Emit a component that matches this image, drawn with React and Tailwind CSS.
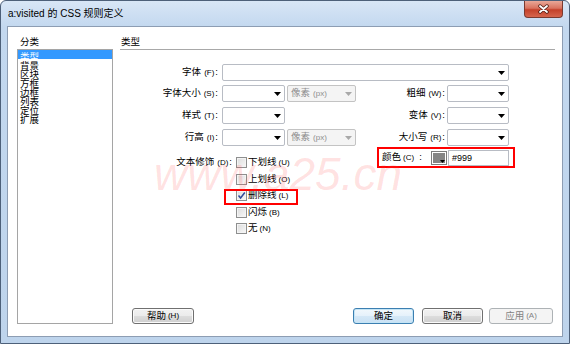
import React from 'react';

const FONT = "font-['Liberation_Sans','Noto_Sans_CJK_SC',sans-serif]";

const CATEGORIES = ['类型', '背景', '区块', '方框', '边框', '列表', '定位', '扩展'];

const Arrow = ({ color = '#000' }) => (
  <svg width="7" height="4" viewBox="0 0 7 4" className="shrink-0">
    <path d="M0 0H7L3.5 4Z" fill={color} />
  </svg>
);

// label like 字体 (F):
function Label({ text, k, w }) {
  return (
    <div className={`${w} text-right whitespace-nowrap shrink-0`}>
      {text}
      <span className="text-[8px] ml-[3px]">({k})</span>
      <span className="ml-[1px]">:</span>
    </div>
  );
}

function Select({ w, disabled, children }) {
  return (
    <div
      className={`${w} h-[17px] shrink-0 flex items-center justify-between rounded-[2px] border pl-[3px] pr-[3px] ${
        disabled ? 'bg-[#f4f4f4] border-[#c3c3c3] text-[#8f8f8f]' : 'bg-white border-[#b8bcc4]'
      }`}
    >
      <span className="whitespace-nowrap">{children}</span>
      <Arrow color={disabled ? '#a8a8a8' : '#000'} />
    </div>
  );
}

const Unit = () => (
  <Select w="w-[69px] ml-[2px]" disabled>
    像素<span className="text-[8px] ml-[3px]">(px)</span>
  </Select>
);

function Check({ checked }) {
  return (
    <div className="w-[11px] h-[11px] shrink-0 border border-[#8e8f8f] bg-[linear-gradient(135deg,#dcdcdc,#f8f8f8)] shadow-[inset_0_0_0_1px_#f4f4f4] flex items-center justify-center">
      {checked && (
        <svg width="9" height="9" viewBox="0 0 9 9">
          <path d="M1.5 4.5L3.6 7L7.8 1.5" fill="none" stroke="#2f4b9c" strokeWidth="1.5" />
        </svg>
      )}
    </div>
  );
}

function Button({ children, w, variant }) {
  const look =
    variant === 'default'
      ? 'border-[#3c7fb1] bg-[linear-gradient(180deg,#f2f8fc_0%,#e5f1fb_50%,#d5e8f7_50%,#c9e1f4_100%)] shadow-[inset_0_0_0_1px_#c4e5f6]'
      : variant === 'disabled'
      ? 'border-[#adb2b5] bg-[#f4f4f4] text-[#838383]'
      : 'border-[#707070] bg-[linear-gradient(180deg,#f2f2f2_0%,#ebebeb_50%,#dddddd_50%,#cfcfcf_100%)] shadow-[inset_0_0_0_1px_#fbfbfb]';
  return (
    <div className={`${w} h-[16px] shrink-0 rounded-[3px] border flex items-center justify-center whitespace-nowrap ${look}`}>
      {children}
    </div>
  );
}

export default function App() {
  const decorations = [
    { t: '下划线', k: 'U' },
    { t: '上划线', k: 'O' },
    { t: '删除线', k: 'L', checked: true },
    { t: '闪烁', k: 'B' },
    { t: '无', k: 'N' },
  ];

  return (
    <div
      className={`w-[570px] h-[344px] flex flex-col border border-[#4d6079] rounded-t-[6px] bg-[linear-gradient(180deg,#d8e6f6_0px,#c3d8ef_26px,#bed4ec_100%)] text-black text-[9.5px] leading-[12px] ${FONT}`}
    >
      {/* Title bar */}
      <div className="h-[25px] shrink-0 flex items-start px-[6px]">
        <span className="self-center ml-[1px] text-[10px] mt-[1px]">a:visited 的 CSS 规则定义</span>
        <div className="ml-auto w-[39px] h-[17px] rounded-b-[4px] border border-t-0 border-[#7a3a30] bg-[linear-gradient(180deg,#e9a898_0%,#d9735f_45%,#c4412a_55%,#d6654d_100%)] flex items-center justify-center">
          <svg width="13" height="10" viewBox="0 0 13 10">
            <path d="M3 2L10 8M10 2L3 8" stroke="#4a1810" strokeWidth="3.4" strokeLinecap="round" />
            <path d="M3 2L10 8M10 2L3 8" stroke="#fff" strokeWidth="1.9" strokeLinecap="round" />
          </svg>
        </div>
      </div>

      {/* Client area */}
      <div className="relative flex-1 mx-[6px] mb-[6px] border border-[#8d9db3] bg-white flex pl-[9px] pt-[9px] pb-[12px]">
        {/* Category list */}
        <div className="w-[96px] flex flex-col shrink-0">
          <div className="h-[13px] pl-[3px]">分类</div>
          <div className="flex-1 border border-[#a5a5a5] bg-white">
            {CATEGORIES.map((c, i) => (
              <div key={c} className={`h-[9px] leading-[9px] pl-[2px] ${i === 0 ? 'bg-[#3399ff] text-white' : ''}`}>
                <span className="block translate-y-[1.5px]">{c}</span>
              </div>
            ))}
          </div>
        </div>

        {/* Type panel */}
        <div className="ml-[7px] w-[435px] flex flex-col">
          <div className="h-[13px] pl-[1px]">类型</div>
          <div className="h-[1px] bg-[#a8a8a8]" />

          <div className="flex items-center h-[17px] mt-[14px]">
            <Label text="字体" k="F" w="w-[98px]" />
            <Select w="w-[287px] ml-[4px]" />
          </div>

          <div className="flex items-center h-[17px] mt-[4px]">
            <Label text="字体大小" k="S" w="w-[98px]" />
            <Select w="w-[63px] ml-[4px]" />
            <Unit />
            <Label text="粗细" k="W" w="w-[89px]" />
            <Select w="w-[62px] ml-[2px]" />
          </div>

          <div className="flex items-center h-[17px] mt-[5px]">
            <Label text="样式" k="T" w="w-[98px]" />
            <Select w="w-[63px] ml-[4px]" />
            <div className="w-[71px] shrink-0" />
            <Label text="变体" k="V" w="w-[89px]" />
            <Select w="w-[62px] ml-[2px]" />
          </div>

          <div className="flex items-center h-[17px] mt-[5px]">
            <Label text="行高" k="I" w="w-[98px]" />
            <Select w="w-[63px] ml-[4px]" />
            <Unit />
            <Label text="大小写" k="R" w="w-[89px]" />
            <Select w="w-[62px] ml-[2px]" />
          </div>

          <div className="flex items-start mt-[1px]">
            <div className="mt-[7.5px] h-[16.5px] flex items-center">
              <Label text="文本修饰" k="D" w="w-[112px]" />
            </div>
            <div className="ml-[4px] w-[141px] mt-[7.5px] shrink-0">
              {decorations.map((d) => (
                <div key={d.k} className="relative h-[16.5px] flex items-center">
                  <Check checked={d.checked} />
                  <span className="ml-[1px] whitespace-nowrap">
                    {d.t}
                    <span className="text-[8px] ml-[2px]">({d.k})</span>
                  </span>
                  {d.checked && (
                    <span className="absolute -left-[12px] top-[1px] w-[74px] h-[16px] border-2 border-[#ff0000]" />
                  )}
                </div>
              ))}
            </div>

            {/* Colour */}
            <div className="w-[138px] h-[21px] shrink-0 border-2 border-[#ff0000] flex items-center pl-[3px]">
              <span className="w-[46px] shrink-0 whitespace-nowrap">
                颜色<span className="text-[8px] ml-[2px]">(C)</span>
                <span className="ml-[5px]">:</span>
              </span>
              <div className="relative ml-[3px] w-[16px] h-[14px] shrink-0 border border-[#7d7d7d] bg-white p-[1px]">
                <div className="w-full h-full bg-[#858585]" />
                <svg width="5" height="3" viewBox="0 0 5 3" className="absolute right-[1px] bottom-[1px]">
                  <path d="M0 0H5L2.5 3Z" fill="#000" />
                </svg>
              </div>
              <div className="ml-[1px] w-[61px] h-[16px] shrink-0 border border-[#b8bcc4] flex items-center pl-[3px] text-[9px]">
                #999
              </div>
            </div>
          </div>

          {/* Buttons */}
          <div className="mt-auto flex items-center h-[16px]">
            <Button w="w-[62px] ml-[12px]">
              帮助<span className="text-[8px] ml-[2px]">(H)</span>
            </Button>
            <Button w="w-[61px] ml-auto" variant="default">确定</Button>
            <Button w="w-[61px] ml-[8px]">取消</Button>
            <Button w="w-[64px] ml-[6px] mr-[2px]" variant="disabled">
              应用<span className="text-[8px] ml-[2px]">(A)</span>
            </Button>
          </div>
        </div>

        {/* Watermark */}
        <div className="pointer-events-none absolute left-[146px] top-[124px] text-[46px] leading-none italic text-[rgba(255,70,70,0.16)] font-['Liberation_Sans',sans-serif] whitespace-nowrap">
          www.a25.cn
        </div>
      </div>
    </div>
  );
}
